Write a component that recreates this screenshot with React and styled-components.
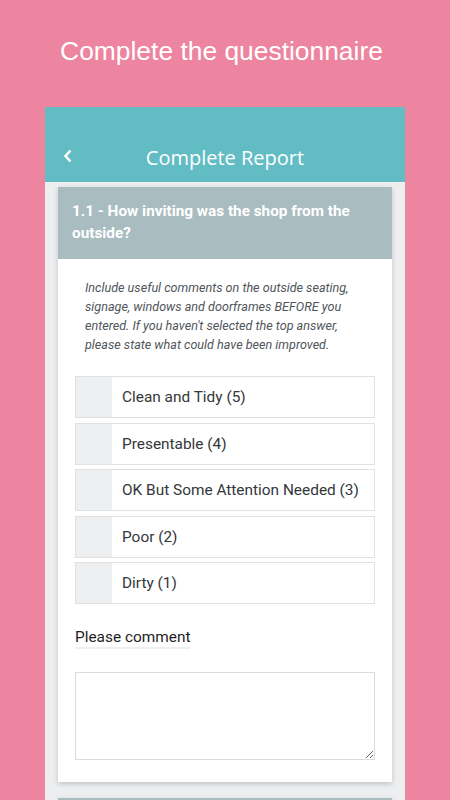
import React from 'react';
import styled, { createGlobalStyle } from 'styled-components';

const GlobalStyle = createGlobalStyle`
  html, body {
    margin: 0;
    padding: 0;
    height: 100%;
    overflow: hidden;
  }
  body {
    background: #ed84a0;
  }
  * {
    box-sizing: border-box;
  }
`;

const Page = styled.div`
  width: 450px;
  height: 800px;
  display: flex;
  flex-direction: column;
  align-items: center;
  background: #ed84a0;
  overflow: hidden;
`;

const Title = styled.h1`
  flex-shrink: 0;
  margin: 32px 0 0;
  padding-right: 7px;
  height: 75px;
  font-family: 'Liberation Sans', Arial, sans-serif;
  font-weight: 400;
  font-size: 26.4px;
  line-height: 38px;
  color: #fff;
`;

const Phone = styled.div`
  width: 360px;
  flex: 1 0 auto;
  display: flex;
  flex-direction: column;
  background: #edeef0;
`;

const Header = styled.header`
  height: 75px;
  flex-shrink: 0;
  display: flex;
  align-items: flex-end;
  padding: 0 0 12px 18px;
  background: #62bcc4;
  position: relative;
`;

const Back = styled.svg`
  width: 10px;
  height: 16px;
  margin-bottom: 6px;
`;

const HeaderTitle = styled.div`
  position: absolute;
  left: 0;
  right: 0;
  bottom: 11px;
  text-align: center;
  font-family: 'Open Sans', sans-serif;
  font-size: 20px;
  color: #fff;
  pointer-events: none;
`;

const Content = styled.div`
  padding: 5px 13px 0;
  display: flex;
  flex-direction: column;
  gap: 16px;
`;

const Card = styled.section`
  background: #fff;
  box-shadow: 0 2px 5px rgba(0, 0, 0, 0.18);
`;

const CardHead = styled.div`
  min-height: 72px;
  background: #a9bcc0;
  padding: 13px 14px 14px;
  font-family: Roboto, sans-serif;
  font-weight: 700;
  font-size: 15.3px;
  line-height: 22px;
  color: #fff;
`;

const CardBody = styled.div`
  padding: 19px 17px 22px;
`;

const Hint = styled.p`
  margin: 0 8px 22px 10px;
  font-family: Roboto, sans-serif;
  font-style: italic;
  font-size: 12.6px;
  line-height: 19px;
  color: #50565b;
`;

const Options = styled.div`
  display: flex;
  flex-direction: column;
  gap: 4.6px;
`;

const Option = styled.label`
  height: 42px;
  display: flex;
  align-items: stretch;
  border: 1px solid #dfe1e3;
  background: #fff;
`;

const Tick = styled.span`
  width: 36px;
  background: #eeeff1;
`;

const OptionText = styled.span`
  display: flex;
  align-items: center;
  padding-left: 10px;
  font-family: Roboto, sans-serif;
  font-size: 15.4px;
  color: #33373a;
`;

const Label = styled.div`
  display: inline-block;
  margin-top: 24px;
  border-bottom: 2px solid #eeeff1;
  font-family: Roboto, sans-serif;
  font-size: 15.4px;
  line-height: 19px;
  color: #1e1e1e;
`;

const TextArea = styled.textarea`
  display: block;
  width: 100%;
  height: 88px;
  margin-top: 23px;
  border: 1px solid #dcdcdc;
  font-family: Roboto, sans-serif;
  font-size: 14px;
  resize: vertical;
`;

const options = [
  'Clean and Tidy (5)',
  'Presentable (4)',
  'OK But Some Attention Needed (3)',
  'Poor (2)',
  'Dirty (1)',
];

export default function App() {
  return (
    <Page>
      <GlobalStyle />
      <Title>Complete the questionnaire</Title>
      <Phone>
        <Header>
          <Back viewBox="0 0 10 16">
            <path d="M7.5 2.5 L2.5 8 L7.5 13.5" fill="none" stroke="#fff" strokeWidth="2.6" />
          </Back>
          <HeaderTitle>Complete Report</HeaderTitle>
        </Header>
        <Content>
          <Card>
            <CardHead>1.1 - How inviting was the shop from the outside?</CardHead>
            <CardBody>
              <Hint>
                Include useful comments on the outside seating, signage, windows and doorframes
                BEFORE you entered. If you haven't selected the top answer, please state what
                could have been improved.
              </Hint>
              <Options>
                {options.map(o => (
                  <Option key={o}>
                    <Tick />
                    <OptionText>{o}</OptionText>
                  </Option>
                ))}
              </Options>
              <Label>Please comment</Label>
              <TextArea />
            </CardBody>
          </Card>
          <Card>
            <CardHead />
          </Card>
        </Content>
      </Phone>
    </Page>
  );
}
